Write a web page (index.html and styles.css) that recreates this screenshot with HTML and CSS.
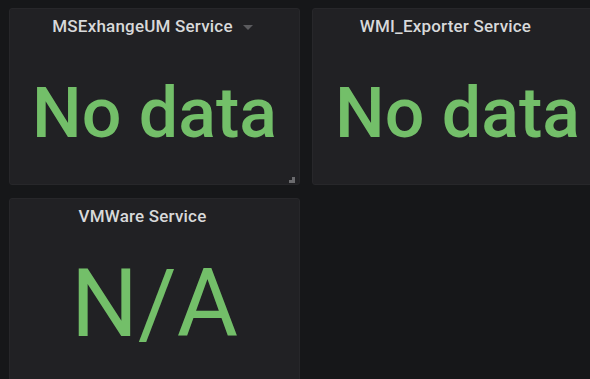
FILE: index.html
```html
<!DOCTYPE html>
<html lang="en">
<head>
  <meta charset="UTF-8" />
  <title>Dashboard</title>
  <link rel="stylesheet" href="styles.css">
</head>
<body>

  <div class="dashboard">
    <div class="panel">
      <div class="panel-title">
        <span>MSExhangeUM Service</span>
        <span class="caret"></span>
      </div>
      <div class="panel-value value-text">No data</div>
      <span class="resize-handle"></span>
    </div>

    <div class="panel">
      <div class="panel-title">
        <span>WMI_Exporter Service</span>
        <span class="caret hidden"></span>
      </div>
      <div class="panel-value value-text">No data</div>
    </div>

    <div class="panel panel-tall">
      <div class="panel-title">
        <span>VMWare Service</span>
        <span class="caret hidden"></span>
      </div>
      <div class="panel-value value-big">N/A</div>
    </div>
  </div>

</body>
</html>
```

FILE: styles.css
```css
body {
  margin: 0;
  background-color: #161719;
  font-family: Roboto, "Liberation Sans", sans-serif;
  overflow: hidden;
}

.dashboard {
  display: grid;
  grid-template-columns: 291px 291px;
  grid-template-rows: 177px 190px;
  column-gap: 12px;
  row-gap: 13px;
  padding: 8px 0 0 9px;
}

.panel {
  position: relative;
  display: flex;
  flex-direction: column;
  background-color: #212124;
  border: 1px solid #27272a;
  border-radius: 3px;
  box-sizing: border-box;
}

.panel-tall .panel-value {
  flex: none;
  height: 142px;
}

.panel-title {
  display: flex;
  justify-content: center;
  align-items: center;
  gap: 10px;
  height: 34px;
  padding-right: 4px;
  box-sizing: border-box;
  color: #d8d9da;
  font-size: 17px;
  font-weight: 500;
  letter-spacing: 0.2px;
}

.caret {
  width: 0;
  height: 0;
  border-left: 5px solid transparent;
  border-right: 5px solid transparent;
  border-top: 5px solid #5b5b5e;
  margin-top: 2px;
}

.caret.hidden {
  visibility: hidden;
}

.panel-value {
  flex: 1;
  display: flex;
  align-items: center;
  justify-content: center;
  color: #73bf69;
  line-height: 1;
  padding-bottom: 2px;
}

.value-text {
  font-size: 70px;
  font-weight: 500;
}

.value-big {
  font-size: 94px;
  font-weight: 400;
}

.resize-handle {
  position: absolute;
  right: 4px;
  bottom: 1px;
  width: 6px;
  height: 6px;
  background:
    linear-gradient(#6b6b6e, #6b6b6e) right bottom / 6px 3px no-repeat,
    linear-gradient(#6b6b6e, #6b6b6e) right bottom / 3px 6px no-repeat;
}
```
